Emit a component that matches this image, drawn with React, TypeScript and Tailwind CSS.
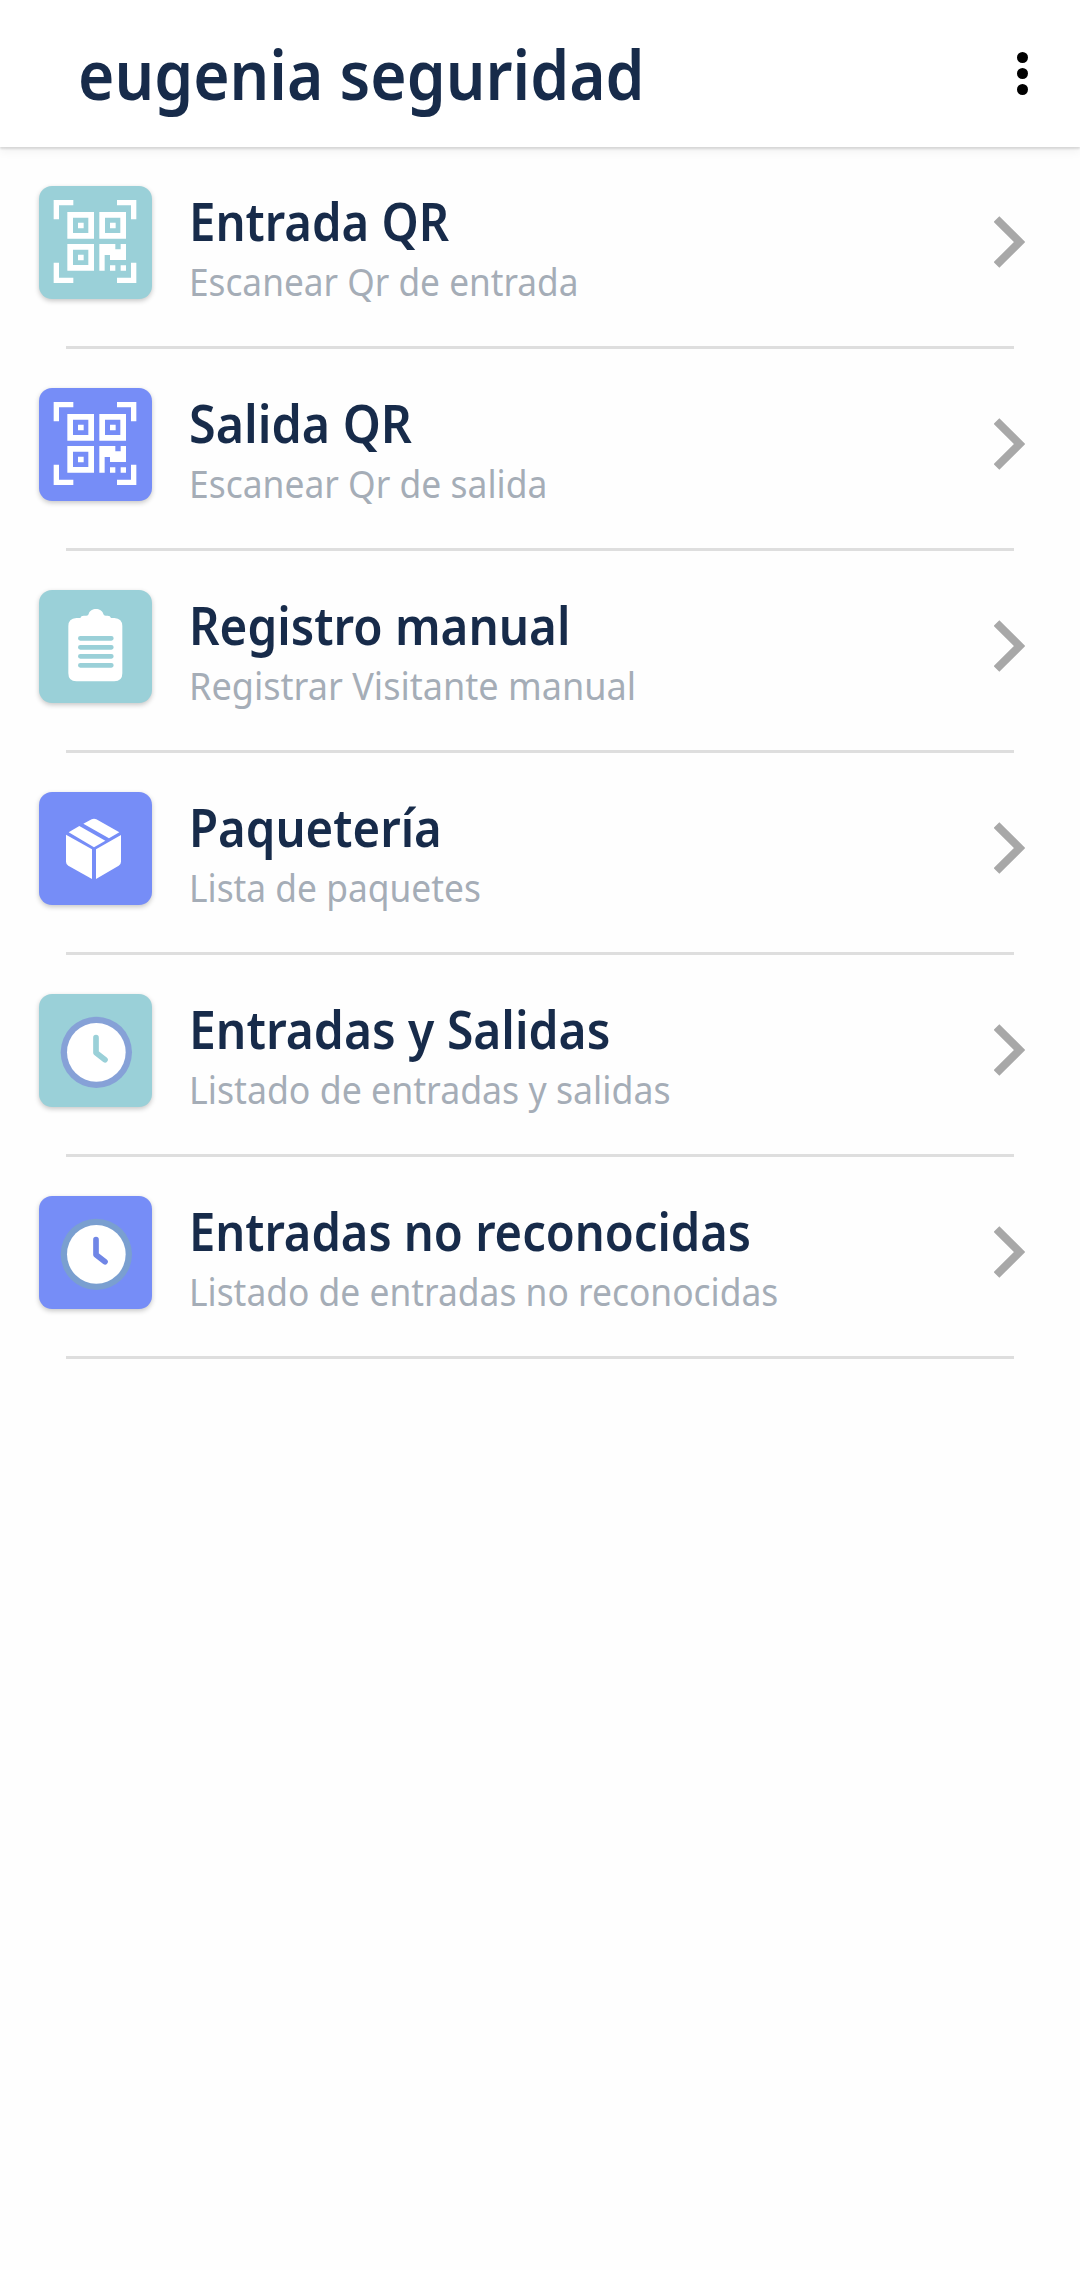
import React from 'react';

interface MenuItem {
  title: string;
  subtitle: string;
  icon: React.FC;
  tileClass: string;
  titleScale: string;
  subtitleScale: string;
}

const QrIcon: React.FC = () => (
  <svg viewBox="0 0 339 339" className="h-full w-full" fill="none" stroke="white">
    <path strokeWidth="16" d="M52 100V50H103M234 50H284V100M52 230V283H103M234 283H284V230" />
    <path strokeWidth="17" d="M93.500 86.500H156.500V149.500H93.500ZM189.500 86.500H252.500V149.500H189.500ZM93.500 182.500H156.500V245.500H93.500Z" />
    <g fill="white" stroke="none">
      <path d="M117 110h17v17h-17zM213 110h17v17h-17zM117 206h17v17h-17z" />
      <path d="M181 174h48v16h16v-16h16v48h-48v-15h-16v47h-16zM213 238h16v16h-16zM245 238h16v16h-16z" />
    </g>
  </svg>
);

const ClipboardIcon: React.FC = () => (
  <svg viewBox="0 0 339 339" className="h-full w-full">
    <path
      fill="white"
      d="M112 84H124Q126 77 134 77H142Q148 77 149 72C154 52 188 52 193 72Q194 77 200 77H206Q214 77 216 84H226Q250 86 250 108V250Q250 274 226 274H112Q88 274 88 250V108Q88 86 112 84Z"
    />
    <path stroke="#9ad0d8" strokeWidth="14" strokeLinecap="round" d="M124 145H217M124 172H217M124 199H217M124 226H217" />
  </svg>
);

const BoxIcon: React.FC = () => (
  <svg viewBox="0 0 339 339" className="h-full w-full" fill="white">
    <path d="M81 128L159 172V261L88 221Q81 217 81 209Z" />
    <path d="M171 172L246 129V209Q246 217 239 221L171 261Z" />
    <path d="M89 121L121 102L199 146L165 166Z" />
    <path d="M133 95L158 82Q165 78 172 82L241 121L210 139Z" />
  </svg>
);

const ClockIcon: React.FC<{ ring: string; hand: string }> = ({ ring, hand }) => (
  <svg viewBox="0 0 339 339" className="h-full w-full">
    <circle cx="172" cy="175" r="107" fill={ring} />
    <circle cx="172" cy="175" r="88" fill="white" />
    <path d="M171 131V176L198 197" fill="none" stroke={hand} strokeWidth="17" strokeLinecap="round" strokeLinejoin="round" />
  </svg>
);

const TEAL = 'bg-[#9ad0d8]';
const BLUE = 'bg-[#768df7]';

const items: MenuItem[] = [
  {
    title: 'Entrada QR',
    subtitle: 'Escanear Qr de entrada',
    icon: QrIcon,
    tileClass: TEAL,
    titleScale: 'scale-x-[0.909]',
    subtitleScale: 'scale-x-[0.927]',
  },
  {
    title: 'Salida QR',
    subtitle: 'Escanear Qr de salida',
    icon: QrIcon,
    tileClass: BLUE,
    titleScale: 'scale-x-[0.932]',
    subtitleScale: 'scale-x-[0.932]',
  },
  {
    title: 'Registro manual',
    subtitle: 'Registrar Visitante manual',
    icon: ClipboardIcon,
    tileClass: TEAL,
    titleScale: 'scale-x-[0.915]',
    subtitleScale: 'scale-x-[0.949]',
  },
  {
    title: 'Paquetería',
    subtitle: 'Lista de paquetes',
    icon: BoxIcon,
    tileClass: BLUE,
    titleScale: 'scale-x-[0.91]',
    subtitleScale: 'scale-x-[0.93]',
  },
  {
    title: 'Entradas y Salidas',
    subtitle: 'Listado de entradas y salidas',
    icon: () => <ClockIcon ring="#86a1d7" hand="#9ad0d8" />,
    tileClass: TEAL,
    titleScale: 'scale-x-[0.923]',
    subtitleScale: 'scale-x-[0.939]',
  },
  {
    title: 'Entradas no reconocidas',
    subtitle: 'Listado de entradas no reconocidas',
    icon: () => <ClockIcon ring="#7a9fd0" hand="#7086e6" />,
    tileClass: BLUE,
    titleScale: 'scale-x-[0.905]',
    subtitleScale: 'scale-x-[0.931]',
  },
];

const MenuRow: React.FC<MenuItem> = ({ title, subtitle, icon: Icon, tileClass, titleScale, subtitleScale }) => (
  <li className="flex h-[202px] flex-col">
    <div className="flex flex-1 items-start pl-[39px] pr-[55px] pt-[39px]">
      <div className={`size-[113px] shrink-0 rounded-[13px] shadow-[0_2px_5px_rgba(0,0,0,0.22)] ${tileClass}`}>
        <Icon />
      </div>
      <div className="ml-[37px] flex flex-1 flex-col items-start whitespace-nowrap">
        <h2 className={`mt-[5px] origin-left text-[52px] font-semibold leading-[60px] text-[#172b4a] ${titleScale}`}>{title}</h2>
        <p className={`mt-[5px] origin-left text-[38px] leading-[50px] text-[#a5adb7] ${subtitleScale}`}>{subtitle}</p>
      </div>
      <svg viewBox="0 0 31 52" className="mt-[30px] h-[52px] w-[31px]" fill="none" stroke="#a8a8a8" strokeWidth="8">
        <path d="M2.500 3L25.500 26L2.500 49" />
      </svg>
    </div>
    <div className="mx-[66px] h-[3px] bg-[#dedede]" />
  </li>
);

export default function App() {
  return (
    <div className="min-h-[2270px] w-full bg-[#fefefe] font-['Noto_Sans',sans-serif]">
      <header className="flex h-[147px] items-start justify-between bg-white pl-[78px] pr-[52px] pt-[34px] shadow-[0_2px_2px_rgba(0,0,0,0.12),0_4px_10px_rgba(0,0,0,0.06)]">
        <h1 className="origin-left scale-x-[0.916] whitespace-nowrap text-[68px] font-semibold leading-[80px] text-[#172b4a]">
          eugenia seguridad
        </h1>
        <button type="button" aria-label="Más opciones" className="mt-[18px] flex flex-col gap-[5px]">
          <span className="size-[11px] rounded-full bg-black" />
          <span className="size-[11px] rounded-full bg-black" />
          <span className="size-[11px] rounded-full bg-black" />
        </button>
      </header>
      <ul>
        {items.map((item) => (
          <MenuRow key={item.title} {...item} />
        ))}
      </ul>
    </div>
  );
}
